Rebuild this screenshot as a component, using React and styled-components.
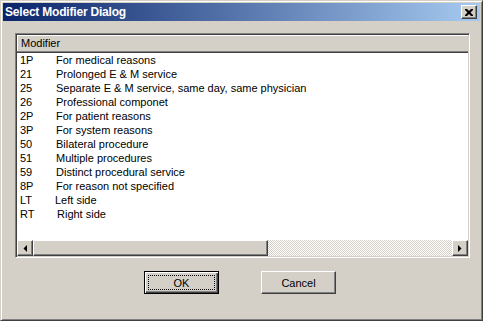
import React from "react";
import styled, { createGlobalStyle } from "styled-components";

const GlobalStyle = createGlobalStyle`
  html, body {
    margin: 0;
    padding: 0;
    background: #d4d0c8;
  }
  * {
    box-sizing: border-box;
  }
`;

const modifiers = [
  { code: "1P", text: "For medical reasons" },
  { code: "21", text: "Prolonged E & M service" },
  { code: "25", text: "Separate E & M service, same day, same physician" },
  { code: "26", text: "Professional componet" },
  { code: "2P", text: "For patient reasons" },
  { code: "3P", text: "For system reasons" },
  { code: "50", text: "Bilateral procedure" },
  { code: "51", text: "Multiple procedures" },
  { code: "59", text: "Distinct procedural service" },
  { code: "8P", text: "For reason not specified" },
  { code: "LT", text: "Left side", shift: -1 },
  { code: "RT", text: "Right side", shift: 1 },
];

const Window = styled.div`
  width: 483px;
  height: 321px;
  display: flex;
  flex-direction: column;
  padding: 2px;
  background: #d4d0c8;
  border: 1px solid;
  border-color: #d4d0c8 #404040 #404040 #d4d0c8;
  box-shadow: inset 1px 1px #fff, inset -1px -1px #808080;
  font-family: "Liberation Sans", Arial, sans-serif;
  font-size: 11px;
  color: #000;
`;

const TitleBar = styled.div`
  height: 18px;
  display: flex;
  align-items: center;
  justify-content: space-between;
  padding: 0 3px 0 2px;
  background: linear-gradient(to right, #0a246a, #a6caf0);
`;

const Title = styled.span`
  color: #fff;
  font-weight: bold;
  font-size: 12px;
  letter-spacing: -0.2px;
`;

const Bevel = styled.div`
  background: #d4d0c8;
  border: 1px solid;
  border-color: #fff #404040 #404040 #fff;
  box-shadow: inset -1px -1px #808080;
  display: flex;
  align-items: center;
  justify-content: center;
`;

const CloseButton = styled(Bevel)`
  width: 16px;
  height: 14px;
`;

const Body = styled.div`
  flex: 1;
  display: flex;
  flex-direction: column;
  padding: 12px 11px 0 12px;
`;

const ListBox = styled.div`
  width: 455px;
  height: 225px;
  display: flex;
  flex-direction: column;
  background: #fff;
  border: 1px solid;
  border-color: #808080 #fff #fff #808080;
  box-shadow: inset 1px 1px #404040, inset -1px -1px #d4d0c8;
  padding: 1px;
`;

const Header = styled.div`
  height: 18px;
  display: flex;
  align-items: center;
  padding: 0 0 1px 4px;
  background: #d4d0c8;
  border-bottom: 1px solid #404040;
  box-shadow: inset 0 -1px #808080, inset 1px 1px #fff;
`;

const Rows = styled.div`
  flex: 1;
  display: flex;
  flex-direction: column;
`;

const Row = styled.div`
  height: 14px;
  display: flex;
  align-items: center;
  padding-left: 3px;
  white-space: nowrap;
`;

const Code = styled.span`
  width: ${(p) => 36 + (p.$shift || 0)}px;
  flex: none;
`;

const ScrollBar = styled.div`
  height: 16px;
  display: flex;
`;

const ArrowButton = styled(Bevel)`
  width: 16px;
  height: 16px;
  flex: none;
`;

const Thumb = styled(Bevel)`
  width: 235px;
  height: 16px;
  flex: none;
`;

const Track = styled.div`
  flex: 1;
  background: repeating-conic-gradient(#fff 0 25%, #d4d0c8 0 50%) 0 0 / 2px 2px;
`;

const ButtonRow = styled.div`
  display: flex;
  justify-content: center;
  gap: 42px;
  margin-top: 13px;
  padding-right: 4px;
`;

const Button = styled.div`
  width: 75px;
  height: 23px;
  position: relative;
  display: flex;
  align-items: center;
  justify-content: center;
  background: #d4d0c8;
  border: 1px solid;
  border-color: ${(p) => (p.$default ? "#000" : "#fff #404040 #404040 #fff")};
  box-shadow: ${(p) =>
    p.$default
      ? "inset 1px 1px #fff, inset -1px -1px #404040, inset -2px -2px #808080"
      : "inset -1px -1px #808080"};
  font-size: 11px;
  padding-top: 1px;
`;

const Focus = styled.span`
  position: absolute;
  inset: 3px;
  border: 1px dotted #000;
`;

const Arrow = ({ dir }) => (
  <svg width="4" height="7" viewBox="0 0 4 7">
    {dir === "left" ? (
      <polygon points="4,0 4,7 0.5,3.5" fill="#000" />
    ) : (
      <polygon points="0,0 0,7 3.5,3.5" fill="#000" />
    )}
  </svg>
);

const CloseIcon = () => (
  <svg width="8" height="7" viewBox="0 0 8 7">
    <path
      d="M0 0h2l2 2 2-2h2v1L5.5 3.5 8 6v1H6L4 5 2 7H0V6l2.5-2.5L0 1z"
      fill="#000"
    />
  </svg>
);

export default function App() {
  return (
    <>
      <GlobalStyle />
      <Window>
        <TitleBar>
          <Title>Select Modifier Dialog</Title>
          <CloseButton>
            <CloseIcon />
          </CloseButton>
        </TitleBar>
        <Body>
          <ListBox>
            <Header>Modifier</Header>
            <Rows>
              {modifiers.map((m) => (
                <Row key={m.code}>
                  <Code $shift={m.shift}>{m.code}</Code>
                  <span>{m.text}</span>
                </Row>
              ))}
            </Rows>
            <ScrollBar>
              <ArrowButton>
                <Arrow dir="left" />
              </ArrowButton>
              <Thumb />
              <Track />
              <ArrowButton>
                <Arrow dir="right" />
              </ArrowButton>
            </ScrollBar>
          </ListBox>
          <ButtonRow>
            <Button $default>
              <Focus />
              OK
            </Button>
            <Button>Cancel</Button>
          </ButtonRow>
        </Body>
      </Window>
    </>
  );
}
